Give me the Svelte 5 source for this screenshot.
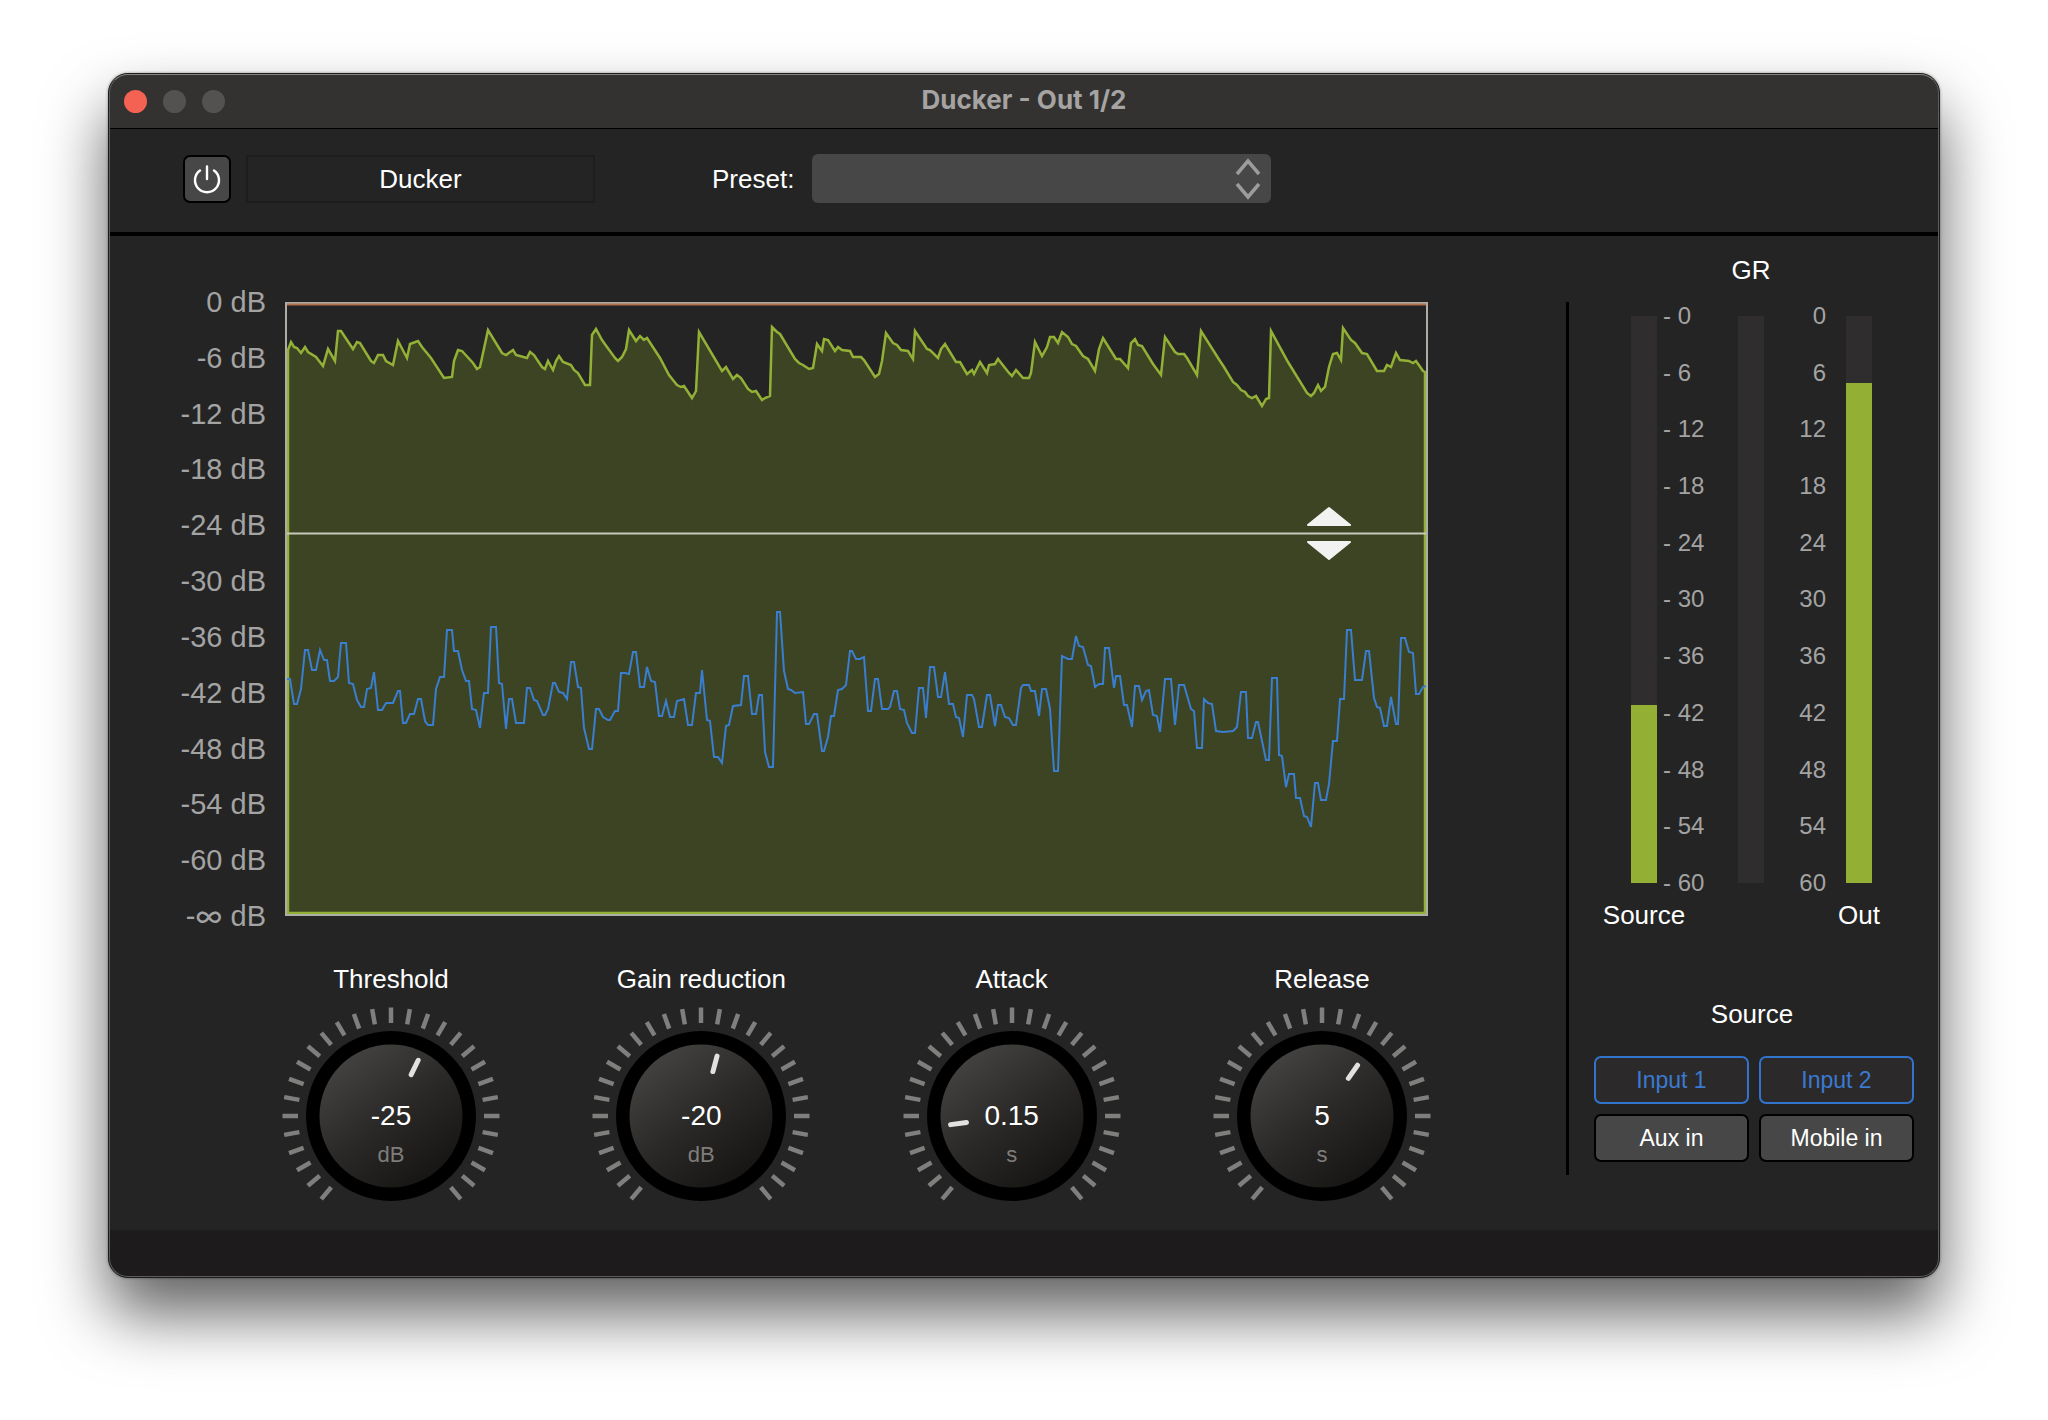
<script>
  const outLevel =
    "3,48 6,40 9,45 12,46 16,51 20,45 23,50 31,55 38,64 43,47 50,59 53,29 56,29 68,47 72,40 75,41 86,59 89,61 93,53 98,53 101,59 108,63 113,39 122,56 125,42 133,39 137,45 146,56 159,76 167,75 169,59 173,48 177,49 188,61 192,67 195,65 203,28 217,51 221,53 228,48 231,53 242,56 245,50 249,53 257,65 260,67 263,59 268,68 271,59 274,54 278,60 286,63 289,68 293,71 300,83 305,83 307,33 311,27 317,38 322,45 330,56 333,59 337,55 341,47 344,28 351,39 355,34 359,38 362,36 375,56 384,73 392,83 396,85 399,84 407,96 411,89 414,30 437,69 441,65 448,77 452,73 456,76 463,87 467,90 471,89 477,98 480,96 485,94 487,25 492,30 495,32 510,57 514,61 518,63 524,67 528,66 532,42 537,49 539,37 543,38 550,49 553,45 557,48 565,49 568,55 576,55 579,58 590,75 594,72 597,59 601,31 608,41 612,43 616,48 623,49 628,57 630,29 642,47 645,48 653,56 656,47 660,42 671,60 675,60 682,72 687,68 689,72 695,60 702,71 704,63 710,62 713,57 724,71 727,74 731,68 738,76 744,76 746,71 750,40 757,54 762,45 765,35 769,35 773,41 777,30 783,35 787,42 791,44 798,54 803,57 810,69 814,47 818,36 831,57 835,57 843,66 846,41 850,37 853,43 857,44 868,62 876,73 880,35 890,50 893,52 899,52 902,56 912,73 916,29 935,59 939,65 948,80 952,83 956,88 960,90 963,94 967,96 971,94 977,104 981,97 984,96 986,29 1003,60 1022,91 1026,94 1029,91 1033,83 1036,89 1040,85 1044,65 1048,52 1052,51 1056,58 1058,26 1066,38 1070,41 1077,51 1082,52 1092,69 1099,69 1102,63 1106,65 1111,51 1115,58 1124,59 1128,61 1131,59 1138,69 1140,70";
  const sourceLevel =
    "2,377 5,377 9,402 12,402 16,387 20,348 23,348 27,368 31,368 35,348 39,358 42,358 45,379 49,379 53,375 56,341 61,341 64,381 68,382 72,398 76,405 79,405 82,387 86,386 89,370 93,408 97,408 101,401 108,401 113,389 115,389 118,421 121,421 125,412 129,412 133,397 136,397 140,419 143,423 148,423 151,387 155,375 159,375 162,328 167,328 169,349 173,349 177,368 181,379 184,379 187,407 191,408 195,426 199,391 203,391 206,325 211,325 214,381 217,382 221,427 224,397 227,397 231,421 239,421 242,386 245,386 249,398 252,399 258,413 260,413 263,407 268,381 270,381 274,390 278,391 282,397 286,360 289,360 293,385 296,386 299,426 304,447 307,447 311,407 314,407 318,415 323,418 325,418 330,409 333,409 336,371 340,371 344,372 348,350 351,350 355,385 359,385 362,365 366,379 370,380 374,414 377,414 381,399 385,415 389,415 392,399 399,397 403,423 407,423 411,391 415,391 417,368 422,418 425,419 429,455 433,455 437,461 441,424 444,423 448,404 456,403 459,374 463,374 467,412 471,412 474,393 477,393 480,450 484,465 488,465 492,310 495,310 499,369 503,387 506,388 510,391 518,390 521,422 524,422 529,412 532,412 537,449 539,449 543,435 546,414 549,414 553,388 557,387 561,383 565,349 567,349 571,357 575,357 579,355 583,409 586,409 590,377 593,377 597,407 603,407 605,405 609,389 612,389 615,407 619,408 622,421 627,431 630,431 634,386 638,386 641,416 645,365 649,365 653,395 656,395 660,370 664,402 668,402 671,415 674,416 678,435 682,393 687,393 689,397 694,425 697,425 702,393 705,393 710,424 713,403 716,403 720,415 724,416 728,423 731,423 736,386 738,383 744,383 746,389 750,389 754,414 757,387 761,387 765,407 769,469 773,469 777,354 783,357 787,357 791,334 794,344 798,345 803,363 806,364 810,385 814,382 818,382 820,346 824,346 829,386 831,374 835,374 839,403 842,403 847,425 850,384 854,384 857,398 861,389 864,388 868,413 872,414 875,430 880,377 886,377 890,423 894,383 899,383 906,407 909,409 912,446 917,446 919,397 923,401 927,402 931,429 938,430 948,429 952,425 956,390 961,390 963,436 967,436 971,420 973,420 981,458 984,458 987,376 992,376 994,453 997,454 1001,485 1004,472 1009,472 1011,496 1015,496 1019,514 1022,515 1026,525 1030,481 1033,481 1036,498 1041,498 1044,482 1048,439 1052,439 1055,397 1059,397 1062,328 1066,328 1070,378 1077,378 1081,349 1084,349 1089,396 1092,405 1095,406 1099,424 1102,424 1106,395 1111,422 1113,422 1116,336 1120,336 1124,350 1128,351 1131,392 1134,392 1138,385 1141,384";

  const dbAxis = [0, -6, -12, -18, -24, -30, -36, -42, -48, -54, -60];
  const meterScale = [0, 6, 12, 18, 24, 30, 36, 42, 48, 54, 60];

  // 29 ticks from -140 to 140 degrees
  const ticks = Array.from({ length: 29 }, (_, i) => i * 10 - 140);

  const knobs = [
    { id: "threshold", name: "Threshold", value: -25, unit: "dB", min: -60, max: 0, angle: 26 },
    { id: "gain", name: "Gain reduction", value: -20, unit: "dB", min: -60, max: 0, angle: 15 },
    { id: "attack", name: "Attack", value: 0.15, unit: "s", min: 0, max: 1, angle: -98 },
    { id: "release", name: "Release", value: 5, unit: "s", min: 0, max: 10, angle: 35 },
  ];

  let inputs = $state([
    { name: "Input 1", on: true },
    { name: "Input 2", on: true },
    { name: "Aux in", on: false },
    { name: "Mobile in", on: false },
  ]);
  const sourceFill = 31.4;
  const outFill = 88.1;
</script>

<div class="window">
  <header class="titlebar">
    <div class="lights">
      <button class="light close" aria-label="Close"></button>
      <button class="light" aria-label="Minimize"></button>
      <button class="light" aria-label="Zoom"></button>
    </div>
    <h1>Ducker - Out 1/2</h1>
  </header>

  <div class="toolbar">
    <button class="power" aria-label="Bypass">
      <svg width="30" height="30" viewBox="0 0 30 30">
        <path d="M8 6.5A12 12 0 1 0 22 6.5M15 2.5V15" />
      </svg>
    </button>
    <div class="plugin-name">Ducker</div>
    <label for="preset">Preset:</label>
    <div class="preset">
      <select id="preset"><option value=""></option></select>
      <svg width="26" height="42" viewBox="0 0 26 42">
        <path d="M2 16L13 3L24 16M2 26L13 39L24 26" />
      </svg>
    </div>
  </div>

  <main>
    <div class="left">
      <div class="graph">
        <ul class="axis">
          {#each dbAxis as db}
            <li>{db} dB</li>
          {/each}
          <li>-<span class="infinity">∞</span> dB</li>
        </ul>
        <svg class="plot" viewBox="0 0 1143 614" preserveAspectRatio="none">
          <polygon class="out-fill" points="3,611 {outLevel} 1140,611" />
          <polygon class="out-line" points="3,611 {outLevel} 1140,611" />
          <rect class="frame" x="1" y="1" width="1141" height="612" />
          <path class="zero" d="M2 2.5H1141" />
          <polyline class="source-line" points={sourceLevel} />
          <path class="threshold" d="M2 231.5H1141" />
          <path class="handle" d="M1023 223L1044 206L1065 223ZM1023 240L1044 257L1065 240Z" />
        </svg>
      </div>

      <div class="knobs">
        {#each knobs as knob}
          <div class="knob">
            <label for={knob.id}>{knob.name}</label>
            <div class="dial">
              <svg width="212" height="212" viewBox="-106 -106 212 212">
                <defs>
                  <linearGradient id="face-{knob.id}" x1="0.2" y1="0.1" x2="0.8" y2="0.9">
                    <stop offset="0" stop-color="#42413f" />
                    <stop offset="0.5" stop-color="#2a2927" />
                    <stop offset="1" stop-color="#171614" />
                  </linearGradient>
                </defs>
                {#each ticks as tick}
                  <path class="tick" d="M0 -108.5V-93" transform="rotate({tick})" />
                {/each}
                <circle r="85" />
                <circle r="71.5" fill="url(#face-{knob.id})" />
                <path class="pointer" d="M0 -62V-46" transform="rotate({knob.angle})" />
              </svg>
              <output for={knob.id}>{knob.value}</output>
              <span class="unit">{knob.unit}</span>
              <input
                id={knob.id}
                type="range"
                min={knob.min}
                max={knob.max}
                step="any"
                value={knob.value}
              />
            </div>
          </div>
        {/each}
      </div>
    </div>

    <div class="divider"></div>

    <aside>
      <div class="meters">
        <span class="gr-name">GR</span>
        <div class="meter m-source"><div class="fill" style="height: {sourceFill}%"></div></div>
        <ul class="scale s-left">
          {#each meterScale as n}
            <li>- {n}</li>
          {/each}
        </ul>
        <div class="meter m-gr"></div>
        <ul class="scale s-right">
          {#each meterScale as n}
            <li>{n}</li>
          {/each}
        </ul>
        <div class="meter m-out"><div class="fill" style="height: {outFill}%"></div></div>
        <span class="source-name">Source</span>
        <span class="out-name">Out</span>
      </div>

      <h2>Source</h2>
      <div class="inputs">
        {#each inputs as input}
          <button
            class:on={input.on}
            aria-pressed={input.on}
            onclick={() => (input.on = !input.on)}>{input.name}</button
          >
        {/each}
      </div>
    </aside>
  </main>

  <footer></footer>
</div>

<style>
  :global(body) {
    background: #fff;
  }

  :global(#app) {
    padding: 73px 108px 143px;
    overflow: hidden;
  }

  .window {
    position: relative;
    border: 1px solid #1c1c1c;
    border-radius: 20px;
    background: #242424;
    color: #fff;
    font-family: "Liberation Sans", Arial, sans-serif;
    font-size: 26px;
    line-height: 28px;
    box-shadow:
      0 0 3px rgba(0, 0, 0, 0.4),
      0 36px 64px rgba(0, 0, 0, 0.62);
  }

  /* thin highlight along the window edge */
  .window::after {
    content: "";
    position: absolute;
    inset: 0;
    border: 1px solid #5c5c5b;
    border-top-color: #858584;
    border-radius: 19px;
    pointer-events: none;
  }

  button,
  select {
    font: inherit;
    padding: 0;
    margin: 0;
  }

  ul {
    list-style: none;
    margin: 0;
    padding: 0;
  }

  svg {
    display: block;
    overflow: visible;
  }

  .titlebar {
    display: grid;
    grid-template-columns: 1fr auto 1fr;
    align-items: center;
    height: 54px;
    padding: 0 15px;
    background: #333230;
    border-bottom: 1px solid #000;
    border-radius: 19px 19px 0 0;
  }

  .lights {
    display: flex;
    gap: 16px;
  }

  .light {
    width: 23px;
    height: 23px;
    border: 0;
    border-radius: 50%;
    background: #535251;
  }

  .close {
    background: #f36253;
  }

  h1 {
    margin: 0;
    padding-bottom: 2px;
    font-family: Inter, sans-serif;
    font-size: 26px;
    font-weight: 700;
    color: #a5a4a2;
  }

  .toolbar {
    display: flex;
    align-items: center;
    padding: 25px 74px 29px;
    border-bottom: 4px solid #000;
  }

  .power {
    display: flex;
    align-items: center;
    justify-content: center;
    width: 48px;
    height: 48px;
    border: 2px solid #000;
    border-radius: 7px;
    background: #474747;
  }

  .power path {
    fill: none;
    stroke: #fff;
    stroke-width: 2.4;
    stroke-linecap: round;
  }

  .plugin-name {
    box-sizing: border-box;
    width: 349px;
    margin: 0 117px 0 15px;
    padding: 8px;
    border: 2px solid #1d1d1d;
    text-align: center;
  }

  .preset {
    display: grid;
    align-items: center;
    margin-left: 18px;
    width: 459px;
  }

  .preset > * {
    grid-area: 1 / 1;
  }

  .preset select {
    appearance: none;
    width: 100%;
    height: 49px;
    border: 0;
    border-radius: 6px;
    background: #474747;
    color: #fff;
  }

  .preset svg {
    justify-self: end;
    margin-right: 10px;
    pointer-events: none;
  }

  .preset path {
    fill: none;
    stroke: #9c9c9c;
    stroke-width: 3.5;
  }

  main {
    display: flex;
    padding: 20px 25px 0 0;
  }

  .left {
    flex: 1;
    min-width: 0;
    margin: 46px 138px 8px 0;
  }

  .graph {
    display: flex;
  }

  .axis {
    display: flex;
    flex-direction: column;
    justify-content: space-between;
    width: 157px;
    margin: -14px 19px -14px 0;
    text-align: right;
    font-size: 29px;
    color: #a3a3a3;
  }

  .infinity {
    font-family: Inter, sans-serif;
  }

  .plot {
    flex: 1;
    min-width: 0;
    height: 614px;
  }

  .plot * {
    fill: none;
    vector-effect: non-scaling-stroke;
  }

  .plot .out-fill {
    fill: #3c4423;
  }

  .out-line {
    stroke: #93b037;
    stroke-width: 2.5;
  }

  .source-line {
    stroke: #3a7ed0;
    stroke-width: 2;
  }

  .frame {
    stroke: #adaca7;
    stroke-width: 2;
  }

  .zero {
    stroke: #b0714a;
    stroke-width: 2;
  }

  .threshold {
    stroke: #c6cab9;
    stroke-width: 2;
  }

  .plot .handle {
    fill: #f2f2f0;
    stroke: #f2f2f0;
    stroke-width: 2;
    stroke-linejoin: round;
  }

  .knobs {
    display: flex;
    justify-content: space-between;
    margin: 49px 0 0 176px;
  }

  .knob {
    width: 212px;
    text-align: center;
  }

  .knob label {
    display: block;
    margin-bottom: 17px;
  }

  .dial {
    display: grid;
    place-items: center;
  }

  .dial > * {
    grid-area: 1 / 1;
  }

  .dial output {
    font-size: 28px;
  }

  .unit {
    padding-top: 78px;
    font-size: 22px;
    color: #7e7d7b;
  }

  .dial input {
    width: 170px;
    height: 170px;
    margin: 0;
    opacity: 0;
  }

  .tick {
    stroke: #7f7f7e;
    stroke-width: 4.5;
  }

  .pointer {
    stroke: #e2e1df;
    stroke-width: 5;
    stroke-linecap: round;
  }

  .divider {
    width: 3px;
    margin: 46px 25px 55px 0;
    background: #000;
  }

  aside {
    width: 320px;
  }

  .meters {
    display: grid;
    grid-template-columns: 26px 81px 26px 82px 26px;
    grid-template-rows: 60px 567px 46px;
    padding-left: 37px;
  }

  .meters span {
    justify-self: center;
  }

  .gr-name {
    grid-area: 1 / 3;
  }

  .source-name {
    grid-area: 3 / 1;
    align-self: end;
  }

  .out-name {
    grid-area: 3 / 5;
    align-self: end;
  }

  .meter {
    display: flex;
    align-items: flex-end;
    grid-row: 2;
    background: #302d2e;
  }

  .m-source {
    grid-column: 1;
  }

  .m-gr {
    grid-column: 3;
  }

  .m-out {
    grid-column: 5;
  }

  .fill {
    width: 100%;
    background: #94b034;
  }

  .scale {
    grid-row: 2;
    display: flex;
    flex-direction: column;
    justify-content: space-between;
    margin: -14px 0;
    font-size: 24px;
    color: #a3a3a3;
  }

  .s-left {
    grid-column: 2;
    padding-left: 6px;
  }

  .s-right {
    grid-column: 4;
    padding-right: 20px;
    text-align: right;
  }

  h2 {
    margin: 71px 0 28px;
    padding-right: 4px;
    font-size: 26px;
    font-weight: 400;
    text-align: center;
  }

  .inputs {
    display: grid;
    grid-template-columns: 1fr 1fr;
    gap: 10px;
  }

  .inputs button {
    height: 48px;
    border: 2px solid #000;
    border-radius: 7px;
    background: #474747;
    color: #fff;
    font-size: 23px;
  }

  .inputs .on {
    border-color: #3273cc;
    background: #2c292a;
    color: #3a7ad0;
  }

  footer {
    height: 47px;
    border-radius: 0 0 19px 19px;
    background: #1e1b1c;
  }
</style>
